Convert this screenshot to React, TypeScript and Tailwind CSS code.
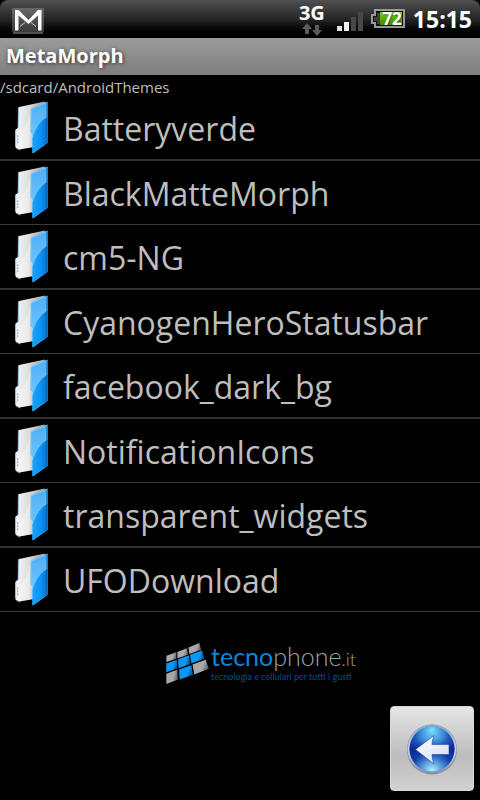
const folders = [
  'Batteryverde',
  'BlackMatteMorph',
  'cm5-NG',
  'CyanogenHeroStatusbar',
  'facebook_dark_bg',
  'NotificationIcons',
  'transparent_widgets',
  'UFODownload',
]

const MailIcon = () => (
  <svg width="32" height="26" viewBox="0 0 32 26" aria-hidden="true">
    <defs>
      <linearGradient id="mail" x1="0" y1="0" x2="0" y2="1">
        <stop offset="0" stopColor="#686868" />
        <stop offset="1" stopColor="#3a3a3a" />
      </linearGradient>
    </defs>
    <rect x="0" y="0" width="32" height="24" rx="1" fill="url(#mail)" />
    <path d="M8 18.500l5-4M24 18.500l-5-4" stroke="#ccc" strokeWidth="1" />
    <path
      d="M3 22.500V2h3.500L16.500 12 26 2h3.500v20.500H26V7.500L16.500 16 6.500 7.500v15z"
      fill="#fff"
    />
    <path d="M1 25h30" stroke="#8a8a8a" strokeWidth="1.2" />
  </svg>
)

const DataArrows = () => (
  <svg width="20" height="13" viewBox="0 0 20 13" aria-hidden="true">
    <path
      d="M5 0l5 6H7v5H3V6H0zM15 13l5-6h-3V2h-4v5h-3z"
      fill="#5c5c5c"
    />
  </svg>
)

const SignalIcon = () => (
  <svg width="26" height="20" viewBox="0 0 26 20" aria-hidden="true">
    <rect x="0" y="15" width="5" height="5" fill="#e4e4e4" />
    <rect x="7" y="11" width="5" height="9" fill="#f2f2f2" />
    <rect x="14" y="6" width="5" height="14" fill="#484848" />
    <rect x="21" y="1" width="5" height="19" fill="#484848" />
  </svg>
)

const Battery = () => (
  <div className="relative h-5 w-[34px]">
    <svg
      className="block"
      width="34"
      height="20"
      viewBox="0 0 34 20"
      aria-hidden="true"
    >
      <defs>
        <linearGradient id="charge" x1="0" y1="0" x2="0" y2="1">
          <stop offset="0" stopColor="#7ccb22" />
          <stop offset="0.5" stopColor="#55ad05" />
          <stop offset="1" stopColor="#3a8a00" />
        </linearGradient>
      </defs>
      <path
        d="M4 1h29v17H4v-4H1V6h3z"
        fill="#111"
        stroke="#999"
        strokeWidth="2"
      />
      <path d="M3 8h3V4h3v11H6v-3H3z" fill="#3c3c3c" />
      <rect x="9" y="3" width="22" height="13" fill="url(#charge)" />
    </svg>
    <span className="absolute inset-y-0 right-[3px] text-[17px]/5 font-bold text-white [text-shadow:1px_1px_1px_#2228]">
      72
    </span>
  </div>
)

const FolderGradients = () => (
  <svg className="absolute size-0" aria-hidden="true">
    <defs>
      <linearGradient id="folderBack" x1="0" y1="0" x2="1" y2="0">
        <stop offset="0" stopColor="#f6f6f6" />
        <stop offset="0.45" stopColor="#dedede" />
        <stop offset="0.8" stopColor="#b4b4b4" />
      </linearGradient>
      <linearGradient id="folderFront" x1="0" y1="0" x2="0" y2="1">
        <stop offset="0" stopColor="#4badf6" />
        <stop offset="1" stopColor="#84d0ff" />
      </linearGradient>
      <linearGradient id="folderShade" x1="0" y1="0" x2="1" y2="0">
        <stop offset="0" stopColor="#18a2ff" />
        <stop offset="0.6" stopColor="#0a90f4" />
        <stop offset="1" stopColor="#0567bd" />
      </linearGradient>
    </defs>
  </svg>
)

const FolderIcon = () => (
  <svg
    className="shrink-0"
    width="34"
    height="53"
    viewBox="0 0 34 54"
    aria-hidden="true"
  >
    <path
      d="M3 7.500Q3 6.500 4 6.200L30 0.500V45L4 49.500 1 48Q0 47.500 0 46V30Q0 29 1 28.500L2.500 27.500z"
      fill="url(#folderBack)"
    />
    <path d="M3 34C10 28 14 20 15 10V47L4 49.500 1 48V29z" fill="#fff" opacity="0.35" />
    <path d="M3 27V7.500Q3 6.500 4 6.200" fill="none" stroke="#58a8e0" strokeWidth="0.8" />
    <path d="M0.500 46V30M1 48l4 2" stroke="#9cc4de" strokeWidth="0.8" />
    <path d="M2.500 35v8" stroke="#aaa" strokeWidth="1.2" strokeDasharray="2 1" />
    <path
      d="M16 8.500Q16 7.500 17 7.100L33 0.500V42.500L18.500 53Q17.500 53.500 17.500 52.500V34L15.500 31.500z"
      fill="url(#folderFront)"
    />
    <path
      d="M33 16V42.500L18.500 53Q17.500 53.500 17.500 52.500V38C20 29 25 20 33 16z"
      fill="url(#folderShade)"
    />
    <path d="M32 1v42" stroke="#0a5ea8" strokeWidth="1.5" opacity="0.45" />
    <path d="M16 31V8.500L32 1.500" fill="none" stroke="#7ccdff" strokeWidth="0.8" />
  </svg>
)

// 3x3 grid of tilted tiles
const LogoMark = () => (
  <svg
    className="shrink-0"
    width="44"
    height="43"
    viewBox="0 0 44 43"
    aria-hidden="true"
  >
    <defs>
      <linearGradient id="tileGrey" x1="0" y1="0" x2="1" y2="0.3">
        <stop offset="0.7" stopColor="#a9a9ac" />
        <stop offset="1" stopColor="#6a6a6c" />
      </linearGradient>
      <linearGradient id="tileBlue" x1="0" y1="0" x2="1" y2="0.3">
        <stop offset="0.7" stopColor="#0b97f5" />
        <stop offset="1" stopColor="#075f9c" />
      </linearGradient>
    </defs>
    <g fill="url(#tileGrey)">
      <path d="M.5 13.700L10.300 10.300V16.700L.3 20z" />
      <path d="M11.300 10L21 6.300 22 12.700 11.500 16.300z" />
      <path d="M22.500 5.500L33.300 1 35 7.700 23.300 12z" />
      <path d="M.3 31.700L11.300 27.700 11.700 37.700 .3 42z" />
      <path d="M26.500 22.500L39.700 17.700 42.700 26.700 28.300 32.500z" />
    </g>
    <g fill="url(#tileBlue)">
      <path d="M.3 21.500L11 17.700 11.300 26.200 .2 30.200z" />
      <path d="M12 17.200L23 13.300 24.200 22 12.700 26.300z" />
      <path d="M24 12.700L36 8.500 38.300 16.700 25.300 21.500z" />
      <path d="M13 27.500L25.300 23.200 27 32.700 13.700 37.500z" />
    </g>
  </svg>
)

const BackIcon = () => (
  <svg width="52" height="54" viewBox="0 0 52 54" aria-hidden="true">
    <defs>
      <linearGradient id="orb" x1="0" y1="0" x2="0" y2="1">
        <stop offset="0" stopColor="#62cdf6" />
        <stop offset="0.25" stopColor="#3d93dc" />
        <stop offset="0.5" stopColor="#0a2c9c" />
        <stop offset="0.75" stopColor="#1a55bc" />
        <stop offset="1" stopColor="#7fd8fa" />
      </linearGradient>
      <radialGradient id="orbSides" cx="0.5" cy="0.5" r="0.5">
        <stop offset="0.5" stopColor="#08218e" stopOpacity="0" />
        <stop offset="1" stopColor="#08218e" stopOpacity="0.6" />
      </radialGradient>
      <radialGradient id="orbGlow" cx="0.5" cy="0.98" r="0.45">
        <stop offset="0" stopColor="#b4f4ff" />
        <stop offset="1" stopColor="#4fa8ee" stopOpacity="0" />
      </radialGradient>
      <radialGradient id="orbTop" cx="0.5" cy="0.08" r="0.4">
        <stop offset="0" stopColor="#7be4ff" />
        <stop offset="1" stopColor="#4fa8ee" stopOpacity="0" />
      </radialGradient>
      <linearGradient id="ring" x1="0" y1="0" x2="0" y2="1">
        <stop offset="0" stopColor="#7fa9c4" />
        <stop offset="0.5" stopColor="#c4cfee" />
        <stop offset="1" stopColor="#7f95bd" />
      </linearGradient>
      <linearGradient id="arrow" x1="0" y1="0" x2="1" y2="1">
        <stop offset="0" stopColor="#fff" />
        <stop offset="1" stopColor="#d4daf0" />
      </linearGradient>
    </defs>
    <circle cx="26" cy="27.500" r="25" fill="#888" />
    <circle cx="26" cy="27" r="24.500" fill="url(#ring)" />
    <circle cx="26" cy="27" r="22.500" fill="url(#orb)" />
    <circle cx="26" cy="27" r="22.500" fill="url(#orbSides)" />
    <circle cx="26" cy="27" r="22.500" fill="url(#orbTop)" />
    <circle cx="26" cy="27" r="22.500" fill="url(#orbGlow)" />
    <path
      d="M9.500 27.500L28 13.500Q26 18 26 22.500H43V32.500H26Q26 37 28 42z"
      fill="url(#arrow)"
      stroke="#2448a0"
      strokeWidth="0.6"
    />
  </svg>
)

const StatusBar = () => (
  <header className="flex h-[38px] items-center justify-between rounded-t-lg bg-linear-to-b from-[#505050] via-[#262626] via-50% to-black pr-2 pl-3 text-white">
    <div className="pt-1">
      <MailIcon />
    </div>
    <div className="flex items-center gap-2">
      <div className="flex flex-col items-center">
        <span className="text-xl/5 font-bold">3G</span>
        <DataArrows />
      </div>
      <div className="pt-1 pl-1">
        <SignalIcon />
      </div>
      <Battery />
      <time className="text-[23px] font-bold">15:15</time>
    </div>
  </header>
)

const App = () => {
  return (
    <div className="flex min-h-screen flex-col bg-black font-['Open_Sans','Noto_Sans',sans-serif] text-[#bebebe]">
      <FolderGradients />
      <StatusBar />
      <h1 className="h-[37px] bg-linear-to-b from-[#9b9b9b] to-[#7d807d] px-1.5 text-xl/9 font-bold text-white [text-shadow:1px_1px_4px_#333]">
        MetaMorph
      </h1>
      <main className="flex grow flex-col">
        <p className="h-[21px] text-[15px]/6">/sdcard/AndroidThemes</p>
        <ul>
          {folders.map((name) => (
            <li
              key={name}
              className="border-b border-[#3a3a3a] odd:border-b-2 odd:border-[#303030]"
            >
              <button
                type="button"
                className="flex h-[63px] w-full items-center gap-3.5 pl-[15px] text-left text-[32px]"
              >
                <FolderIcon />
                <span className="pt-0.5">{name}</span>
              </button>
            </li>
          ))}
        </ul>
        <div className="mx-auto flex gap-px pt-[30px] pl-[42px]">
          <LogoMark />
          <div className="font-[Lato,sans-serif] whitespace-nowrap">
            <p className="text-[25px]/7 font-light text-[#a0a0a4]">
              <span className="font-normal text-[#0c86d6]">tecno</span>phone
              <span className="text-lg">.it</span>
            </p>
            <p className="text-[9px]/2 text-[#064f86]">
              tecnologia e cellulari per tutti i gusti
            </p>
          </div>
        </div>
        <div className="mt-auto flex justify-end pr-1.5 pb-[9px]">
          <button
            type="button"
            aria-label="Back"
            className="flex h-[85px] w-21 items-center justify-center rounded-sm border border-[#d8d8d8] bg-linear-to-b from-[#e6e6e6] via-[#bcbcbc] via-60% to-[#d2d2d2]"
          >
            <BackIcon />
          </button>
        </div>
      </main>
    </div>
  )
}

export default App
